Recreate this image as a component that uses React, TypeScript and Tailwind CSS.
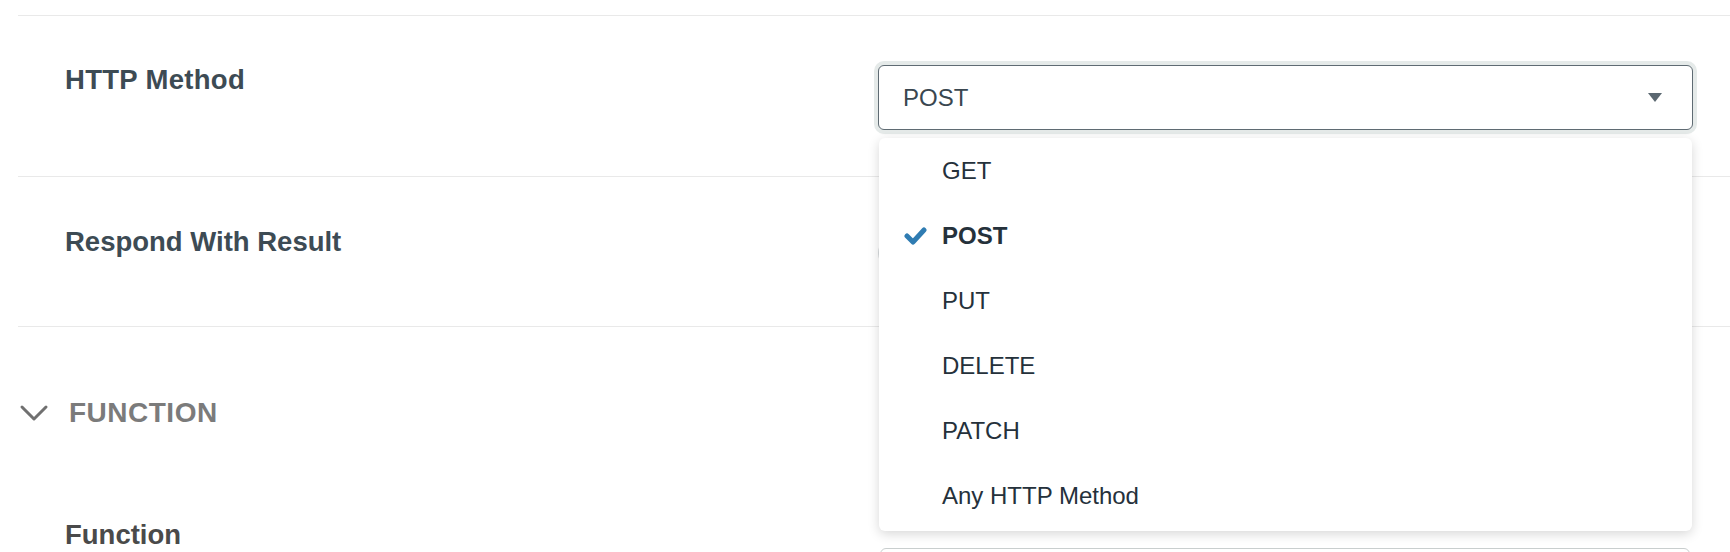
import { useState } from "react";

const methods = ["GET", "POST", "PUT", "DELETE", "PATCH", "Any HTTP Method"];

const CheckIcon = () => (
  <svg width="23" height="19" viewBox="0 0 23 19" fill="none">
    <polyline
      points="3,10 9,16 20,4"
      stroke="#2f7cb2"
      strokeWidth="5"
      strokeLinecap="round"
      strokeLinejoin="round"
    />
  </svg>
);

const Caret = () => (
  <svg width="14" height="9" viewBox="0 0 14 9">
    <polygon points="0,0 14,0 7,9" fill="#5b6871" />
  </svg>
);

const Chevron = () => (
  <svg width="30" height="18" viewBox="0 0 30 18" fill="none">
    <polyline
      points="3,3 15,15 27,3"
      stroke="#707070"
      strokeWidth="3"
      strokeLinecap="round"
      strokeLinejoin="round"
    />
  </svg>
);

const MethodSelect = () => {
  const [value] = useState("POST");

  return (
    <div className="relative h-[65px] w-[815px]">
      <div className="flex h-full items-center justify-between rounded-md border border-[#5f6b73] bg-white pl-6 pr-[30px] shadow-[0_0_0_4px_#e5eae9,0_3px_3px_rgba(0,0,0,0.12)]">
        <span className="text-[24px] text-[#3a4750]">{value}</span>
        <Caret />
      </div>

      <ul className="absolute top-[73px] right-px left-px z-10 rounded-md bg-white pb-[3px] shadow-[0_3px_12px_rgba(0,0,0,0.16)]">
        {methods.map((m) => (
          <li key={m} className="relative flex h-[65px] items-center pl-[63px] text-[24px] text-[#25313b]">
            {m === value && (
              <span className="absolute top-[23px] left-[25px]">
                <CheckIcon />
              </span>
            )}
            <span className={m === value ? "font-bold" : ""}>{m}</span>
          </li>
        ))}
      </ul>
    </div>
  );
};

export default function App() {
  return (
    <div className="h-[552px] w-[1730px] overflow-hidden bg-white pt-[15px] pl-[18px] font-['Liberation_Sans',Arial,sans-serif]">
      {/* http method */}
      <div className="flex h-[161px] items-start border-t border-[#e9e9e9] pt-[48px] pl-[47px]">
        <label className="w-[813px] text-[27.5px] leading-[32px] font-bold tracking-[0.3px] text-[#3d4b54]">HTTP Method</label>
        <div className="mt-px">
          <MethodSelect />
        </div>
      </div>

      {/* respond with result */}
      <div className="flex h-[150px] items-start border-t border-[#e9e9e9] pt-[49px] pl-[47px]">
        <label className="w-[813px] text-[27.5px] leading-[32px] font-bold text-[#3d4b54]">Respond With Result</label>
        <div className="mt-[10px] h-[34px] w-[64px] rounded-full bg-[#d9dddf]" />
      </div>

      {/* function section */}
      <div className="border-t border-[#e9e9e9]">
        <div className="flex items-center gap-[20px] pt-[70px] pl-[1px]">
          <Chevron />
          <span className="text-[28px] leading-[32px] font-bold tracking-[0.5px] text-[#7b7b7b]">FUNCTION</span>
        </div>
        <div className="mt-[90px] flex items-start pl-[47px]">
          <label className="w-[815px] text-[27.5px] leading-[32px] font-bold text-[#4a4a4a]">Function</label>
          <div className="mt-[29px] h-[60px] w-[810px] rounded-md border border-[#c9cece] bg-white" />
        </div>
      </div>
    </div>
  );
}
